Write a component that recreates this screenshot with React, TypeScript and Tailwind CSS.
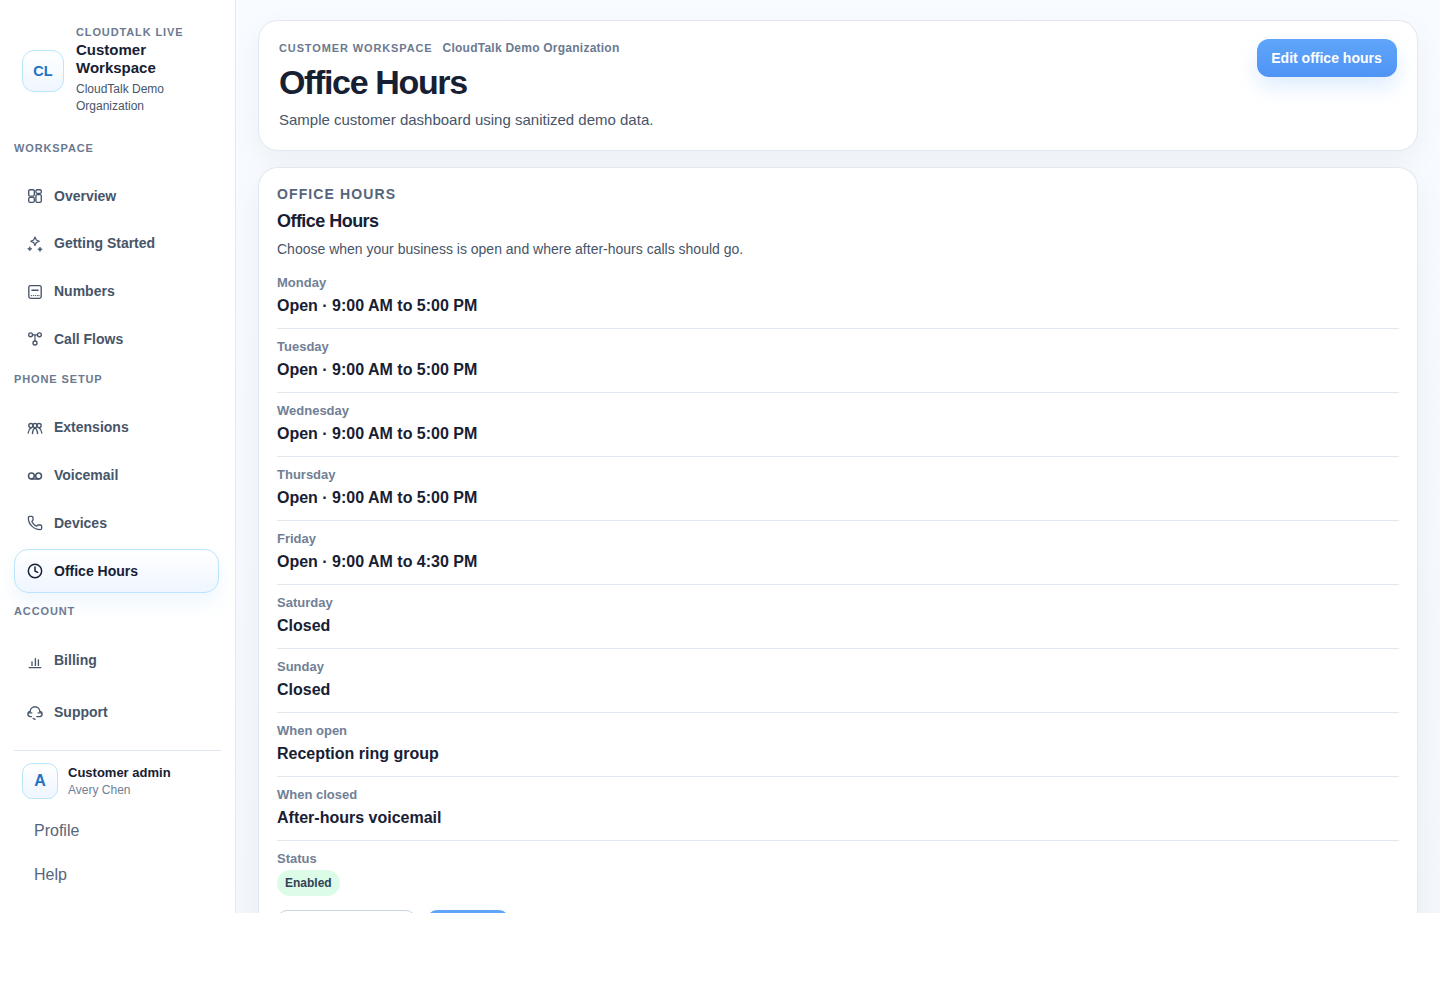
import React from "react";
import { Phone, Clock } from "lucide-react";

const S = ({ children }: { children: React.ReactNode }) => (
  <svg width="16" height="16" viewBox="0 0 16 16" fill="none" stroke="currentColor" strokeWidth="1.35" strokeLinecap="round" strokeLinejoin="round">{children}</svg>
);

const Overview = () => (
  <S>
    <rect x="1.7" y="1.7" width="5.6" height="6.4" rx="1.3" />
    <rect x="8.9" y="1.7" width="5.4" height="3.6" rx="1.3" />
    <rect x="8.9" y="6.6" width="5.4" height="7.8" rx="1.3" />
    <rect x="1.7" y="9.4" width="5.6" height="5" rx="1.3" />
  </S>
);
const Sparks = () => (
  <svg width="16" height="16" viewBox="0 0 16 16" fill="none" stroke="currentColor" strokeWidth="1.2" strokeLinejoin="round">
    <path d="M8 1 9.3 4 12.3 5.3 9.3 6.6 8 9.6 6.7 6.6 3.7 5.3 6.7 4Z" />
    <path d="M2.8 10.6 3.4 12.2 5 12.8 3.4 13.4 2.8 15 2.2 13.4.6 12.8 2.2 12.2Z" fill="currentColor" strokeWidth=".6" />
    <path d="M13 11 13.7 12.6 15.3 13.3 13.7 14 13 15.6 12.3 14 10.7 13.3 12.3 12.6Z" fill="currentColor" strokeWidth=".6" />
  </svg>
);
const Numbers = () => (
  <S>
    <rect x="1.8" y="1.6" width="12.4" height="12.8" rx="1.8" />
    <path d="M5 6.2h6" strokeWidth="1.6" />
    <path d="M4.4 11.6h.01M6.4 11.6h.01M8.4 11.6h.01M10.4 11.6h.01M12 11.6h.01" />
  </S>
);
const Flows = () => (
  <S>
    <circle cx="3.6" cy="3.8" r="1.9" />
    <circle cx="12.4" cy="3.8" r="1.9" />
    <circle cx="8" cy="12" r="2" />
    <path d="M5.5 3.8h5M8 3.8V10" strokeWidth="1.2" />
  </S>
);
const Extensions = () => (
  <S>
    <circle cx="3.9" cy="5.6" r="2.1" />
    <circle cx="8" cy="5.6" r="2.1" />
    <circle cx="12.1" cy="5.6" r="2.1" />
    <path d="M1.2 13c.2-2.4 1-4.2 2.7-5.2M5.4 13.6c.2-3 1-4.8 2.6-5.8 1.6 1 2.4 2.8 2.6 5.8M14.8 13c-.2-2.4-1-4.2-2.7-5.2" />
  </S>
);
const VoicemailIcon = () => (
  <svg width="16" height="16" viewBox="0 0 16 16" fill="none" stroke="currentColor" strokeWidth="1.5" strokeLinecap="round">
    <circle cx="4.4" cy="8" r="2.9" />
    <circle cx="11.6" cy="8" r="2.9" />
    <path d="M4.4 10.9h7.2" />
  </svg>
);
const Billing = () => (
  <S>
    <path d="M2.2 14.6h11.6" />
    <path d="M5 12.4V9M8.4 12.4V5.6M11.4 12.4V6.8" />
  </S>
);
const Support = () => (
  <S>
    <path d="M4.4 11.6H3.2A2.5 2.5 0 0 1 .9 9 2.6 2.6 0 0 1 3.2 6.5 4.8 4.8 0 0 1 12.8 6.5 2.6 2.6 0 0 1 15.1 9 2.5 2.5 0 0 1 12.8 11.6H9.8" />
    <path d="M1.4 7.9h3.4M11.2 7.9h3.4" />
    <path d="M6.2 13.4 8 14.4" />
  </S>
);

type Item = { label: string; icon: React.ReactNode; active?: boolean };

const NavRow = ({ label, icon, active, tall }: Item & { tall?: boolean }) => (
  <div
    className={`flex items-center gap-[11px] rounded-[14px] border px-[12px] text-[14px] font-bold ${tall ? "h-12" : "h-11"} ${
      active
        ? "border-[#bae6fd] bg-gradient-to-b from-white to-[#eff6ff] text-[#172033] shadow-[0_10px_20px_rgba(96,165,250,0.1)]"
        : "border-transparent text-[#475569]"
    }`}
  >
    <span className="flex h-4 w-4 shrink-0 items-center justify-center">{icon}</span>
    <span>{label}</span>
  </div>
);

const SectionLabel = ({ children, className }: { children: React.ReactNode; className: string }) => (
  <div className={`text-[11px] font-bold uppercase leading-[13px] tracking-[0.08em] text-[#6b7a90] ${className}`}>{children}</div>
);

const rows: [string, React.ReactNode][] = [
  ["Monday", "Open · 9:00 AM to 5:00 PM"],
  ["Tuesday", "Open · 9:00 AM to 5:00 PM"],
  ["Wednesday", "Open · 9:00 AM to 5:00 PM"],
  ["Thursday", "Open · 9:00 AM to 5:00 PM"],
  ["Friday", "Open · 9:00 AM to 4:30 PM"],
  ["Saturday", "Closed"],
  ["Sunday", "Closed"],
  ["When open", "Reception ring group"],
  ["When closed", "After-hours voicemail"],
];

export default function App() {
  return (
    <div className="flex h-[913px] overflow-hidden bg-gradient-to-b from-[#f8fbff] to-[#f4f7fb] font-['Liberation_Sans',Arial,sans-serif]">
      <aside className="flex w-[236px] shrink-0 flex-col border-r border-[#e2e8f0] bg-white pl-[14px] pr-[14px]">
        <div className="flex items-center gap-3 pl-2 pt-[25px]">
          <div className="mt-[2px] flex h-[42px] w-[42px] shrink-0 items-center justify-center rounded-[12px] border border-[#bae6fd] bg-gradient-to-b from-white to-[#eff6ff] pt-[2px] text-[14.5px] font-bold text-[#2272c3]">
            CL
          </div>
          <div>
            <div className="text-[11px] font-bold uppercase leading-[14px] tracking-[0.08em] text-[#6b7a90]">CloudTalk Live</div>
            <div className="mt-[2px] text-[15px] font-bold leading-[18px] text-[#172033]">Customer Workspace</div>
            <div className="mt-[4px] text-[12px] leading-[17px] text-[#475569]">CloudTalk Demo Organization</div>
          </div>
        </div>
        <SectionLabel className="mt-[27px]">Workspace</SectionLabel>
        <div className="mt-[19.1px] flex w-[205px] flex-col gap-[3.75px]">
          <NavRow label="Overview" icon={<Overview />} />
          <NavRow label="Getting Started" icon={<Sparks />} />
          <NavRow label="Numbers" icon={<Numbers />} />
          <NavRow label="Call Flows" icon={<Flows />} />
        </div>
        <SectionLabel className="mt-[11.65px]">Phone Setup</SectionLabel>
        <div className="mt-[19.8px] flex w-[205px] flex-col gap-[3.75px]">
          <NavRow label="Extensions" icon={<Extensions />} />
          <NavRow label="Voicemail" icon={<VoicemailIcon />} />
          <NavRow label="Devices" icon={<Phone size={16} strokeWidth={2} />} />
          <NavRow label="Office Hours" active icon={<Clock size={16} strokeWidth={2.2} />} />
        </div>
        <SectionLabel className="mt-[11.95px]">Account</SectionLabel>
        <div className="mt-[19px] flex w-[205px] flex-col gap-1">
          <NavRow label="Billing" tall icon={<Billing />} />
          <NavRow label="Support" tall icon={<Support />} />
        </div>
        <div className="mt-[13px] border-t border-[#e2e8f0] pl-2 pt-3">
          <div className="flex items-center gap-[10px]">
            <div className="flex h-9 w-9 shrink-0 items-center justify-center rounded-[10px] border border-[#bae6fd] bg-gradient-to-b from-white to-[#eff6ff] text-[16px] font-bold text-[#2272c3]">
              A
            </div>
            <div className="pt-[1px]">
              <div className="text-[13px] font-bold leading-[17px] text-[#172033]">Customer admin</div>
              <div className="mt-[1px] text-[12px] leading-[17px] text-[#718096]">Avery Chen</div>
            </div>
          </div>
        </div>
        <div className="mt-[10px] flex h-11 items-center pl-5 text-[16px] text-[#56657a]">Profile</div>
        <div className="flex h-11 items-center pl-5 text-[16px] text-[#56657a]">Help</div>
      </aside>
      <main className="flex min-w-0 flex-1 flex-col gap-4 pl-[22px] pr-[22px] pt-5">
        <section className="flex shrink-0 items-start justify-between rounded-[20px] border border-[#e2e8f0] bg-white pb-[19px] pl-5 pr-5 pt-[18px] shadow-[0_10px_30px_rgba(15,23,42,0.05)]">
          <div>
            <div className="flex items-center gap-[10px]">
              <span className="text-[11px] font-bold uppercase leading-[18px] tracking-[0.08em] text-[#6b7a90]">Customer workspace</span>
              <span className="text-[12px] font-bold leading-[18px] tracking-[0.02em] text-[#6b7a90]">CloudTalk Demo Organization</span>
            </div>
            <h1 className="mt-[5px] text-[34px] font-bold leading-[40px] tracking-[-0.04em] text-[#172033]">Office Hours</h1>
            <p className="mt-[7px] text-[15px] leading-[22px] text-[#475569]">Sample customer dashboard using sanitized demo data.</p>
          </div>
          <button className="h-[38px] w-[140px] rounded-[12px] bg-gradient-to-b from-[#60a5fa] to-[#4f94f4] pr-[1px] text-[14px] font-bold text-white shadow-[0_10px_20px_rgba(96,165,250,0.2)]">
            Edit office hours
          </button>
        </section>
        <section className="flex-1 rounded-t-[20px] border border-b-0 border-[#e2e8f0] bg-white px-[18px] pt-[18px] shadow-[0_10px_30px_rgba(15,23,42,0.05)]">
          <div className="text-[14px] font-bold uppercase leading-[17px] tracking-[0.08em] text-[#56657a]">Office Hours</div>
          <div className="mt-[7px] text-[18px] font-bold leading-[22px] tracking-[-0.03em] text-[#172033]">Office Hours</div>
          <div className="mt-[7px] text-[14px] leading-[20px] text-[#475569]">
            Choose when your business is open and where after-hours calls should go.
          </div>
          <div className="mt-[6px]">
            {rows.map(([k, v]) => (
              <div key={k} className="h-16 border-b border-[#e2e8f0] pt-[9px]">
                <div className="text-[13px] font-bold leading-[17px] text-[#718096]">{k}</div>
                <div className="mt-[4px] text-[16px] font-bold leading-[22px] text-[#172033]">{v}</div>
              </div>
            ))}
            <div className="pt-[9px]">
              <div className="text-[13px] font-bold leading-[17px] text-[#718096]">Status</div>
              <span className="mt-[3px] inline-block rounded-full bg-[#dcfce7] px-2 py-[5px] text-[12px] font-bold leading-[16px] text-[#334155]">Enabled</span>
              <div className="mt-[14px] flex gap-[11px]">
                <div className="h-9 w-[139px] rounded-[10px] border border-[#cbd5e1] bg-white" />
                <div className="h-9 w-[82px] rounded-[10px] bg-[#60a5fa] shadow-[0_10px_20px_rgba(96,165,250,0.2)]" />
              </div>
            </div>
          </div>
        </section>
      </main>
    </div>
  );
}
